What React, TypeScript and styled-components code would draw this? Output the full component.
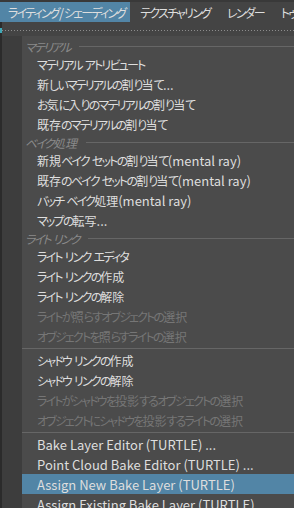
import styled, { createGlobalStyle } from "styled-components";

const GlobalStyle = createGlobalStyle`
  html, body {
    margin: 0;
    padding: 0;
    background: #2f2f2f;
    overflow: hidden;
  }
`;

type Entry =
  | { kind: "header"; label: string }
  | { kind: "item"; label: string; disabled?: boolean; active?: boolean }
  | { kind: "sep" };

const entries: Entry[] = [
  { kind: "header", label: "マテリアル" },
  { kind: "item", label: "マテリアル アトリビュート" },
  { kind: "item", label: "新しいマテリアルの割り当て..." },
  { kind: "item", label: "お気に入りのマテリアルの割り当て" },
  { kind: "item", label: "既存のマテリアルの割り当て" },
  { kind: "header", label: "ベイク処理" },
  { kind: "item", label: "新規ベイク セットの割り当て(mental ray)" },
  { kind: "item", label: "既存のベイク セットの割り当て(mental ray)" },
  { kind: "item", label: "バッチ ベイク処理(mental ray)" },
  { kind: "item", label: "マップの転写..." },
  { kind: "header", label: "ライト リンク" },
  { kind: "item", label: "ライト リンク エディタ" },
  { kind: "item", label: "ライト リンクの作成" },
  { kind: "item", label: "ライト リンクの解除" },
  { kind: "item", label: "ライトが照らすオブジェクトの選択", disabled: true },
  { kind: "item", label: "オブジェクトを照らすライトの選択", disabled: true },
  { kind: "sep" },
  { kind: "item", label: "シャドウ リンクの作成" },
  { kind: "item", label: "シャドウ リンクの解除" },
  { kind: "item", label: "ライトがシャドウを投影するオブジェクトの選択", disabled: true },
  { kind: "item", label: "オブジェクトにシャドウを投影するライトの選択", disabled: true },
  { kind: "sep" },
  { kind: "item", label: "Bake Layer Editor (TURTLE) ..." },
  { kind: "item", label: "Point Cloud Bake Editor (TURTLE) ..." },
  { kind: "item", label: "Assign New Bake Layer (TURTLE)", active: true },
  { kind: "item", label: "Assign Existing Bake Layer (TURTLE)" },
];

const menus = ["ライティング/シェーディング", "テクスチャリング", "レンダー", "トゥーン"];

// the UI font sets kana condensed and latin a little larger than kanji
const RUNS = /([\u3040-\u30FF]+|[\x20-\x7E]+)/;
const KANA = /^[\u3040-\u30FF]+$/;
const LATIN = /^[\x20-\x7E]+$/;
const label = (text: string) =>
  text
    .split(RUNS)
    .filter(Boolean)
    .map((part, i) =>
      KANA.test(part) ? (
        <Kana key={i}>{part}</Kana>
      ) : LATIN.test(part) ? (
        <Latin key={i}>{part}</Latin>
      ) : (
        <span key={i}>{part}</span>
      )
    );

function App() {
  return (
    <>
      <GlobalStyle />
      <Frame>
        <MenuBar>
          {menus.map((m, i) => (
            <MenuTitle key={m} $active={i === 0}>
              <span>{label(m)}</span>
            </MenuTitle>
          ))}
        </MenuBar>
        <Body>
          <DesktopEdge />
          <Dropdown>
            <TearOff>
              <Dots />
            </TearOff>
            <Panel>
              {entries.map((e, i) => {
                if (e.kind === "header")
                  return (
                    <Header key={i}>
                      <HeaderLabel>{label(e.label)}</HeaderLabel>
                      <HeaderRule />
                    </Header>
                  );
                if (e.kind === "sep") return <Separator key={i} />;
                return (
                  <Item key={i} $disabled={e.disabled} $active={e.active}>
                    <span>{label(e.label)}</span>
                  </Item>
                );
              })}
            </Panel>
          </Dropdown>
        </Body>
      </Frame>
    </>
  );
}
export default App;

const Frame = styled.div`
  width: 294px;
  height: 508px;
  overflow: hidden;
  display: flex;
  flex-direction: column;
  font-family: "Noto Sans CJK JP", "Noto Sans", sans-serif;
  font-size: 12px;
  color: #dedede;
`;

const Kana = styled.span`
  font-feature-settings: "palt";
  letter-spacing: -1.8px;
`;

const Latin = styled.span`
  font-size: 13px;
`;

const MenuBar = styled.div`
  height: 20px;
  flex: none;
  display: flex;
  align-items: stretch;
  gap: 4px;
  background: #444444;
  border-top: 2px solid #393939;
  white-space: pre;
  overflow: hidden;
`;

const MenuTitle = styled.div<{ $active?: boolean }>`
  display: flex;
  align-items: center;
  padding: 0 5px 0 8px;
  margin-right: ${(p) => (p.$active ? "-2px" : "0")};
  background: ${(p) => (p.$active ? "#5285a6" : "transparent")};
  color: #dedede;
`;

const Body = styled.div`
  flex: 1;
  display: flex;
  min-height: 0;
`;

const DesktopEdge = styled.div`
  width: 2px;
  flex: none;
  background: linear-gradient(
    to bottom,
    #2b2b2b 0,
    #2b2b2b 6px,
    #3fa9b8 6px,
    #3fa9b8 11px,
    #2b2b2b 11px
  );
`;

const Dropdown = styled.div`
  flex: 1;
  display: flex;
  flex-direction: column;
  min-width: 0;
`;

const TearOff = styled.div`
  height: 14px;
  flex: none;
  background: #444444;
  display: flex;
  align-items: flex-start;
  padding-top: 8px;
  box-sizing: border-box;
`;

const Dots = styled.div`
  height: 1px;
  width: 100%;
  background-image: repeating-linear-gradient(
    to right,
    #8c8c8c 0,
    #8c8c8c 1px,
    transparent 1px,
    transparent 3px
  );
`;

const Panel = styled.div`
  flex: 1;
  background: linear-gradient(to right, #3d3d3d 20px, #4b4b4b 20px);
  padding-top: 2px;
`;

const Header = styled.div`
  height: 16px;
  margin-left: 20px;
  display: flex;
  align-items: center;
  gap: 9px;
  padding-left: 3px;
`;

const HeaderLabel = styled.span`
  color: #8a8a8a;
  font-style: italic;
  white-space: pre;
`;

const HeaderRule = styled.div`
  flex: 1;
  height: 1px;
  background: #666666;
`;

const Item = styled.div<{ $disabled?: boolean; $active?: boolean }>`
  height: 20px;
  margin-left: 20px;
  padding-left: 15px;
  display: flex;
  align-items: center;
  white-space: pre;
  color: ${(p) => (p.$disabled ? "#767676" : "#dedede")};
  background: ${(p) => (p.$active ? "#5285a6" : "transparent")};
`;

const Separator = styled.div`
  height: 4px;
  margin-left: 20px;
  display: flex;
  align-items: center;
  &::before {
    content: "";
    flex: 1;
    height: 1px;
    background: #666666;
  }
`;
